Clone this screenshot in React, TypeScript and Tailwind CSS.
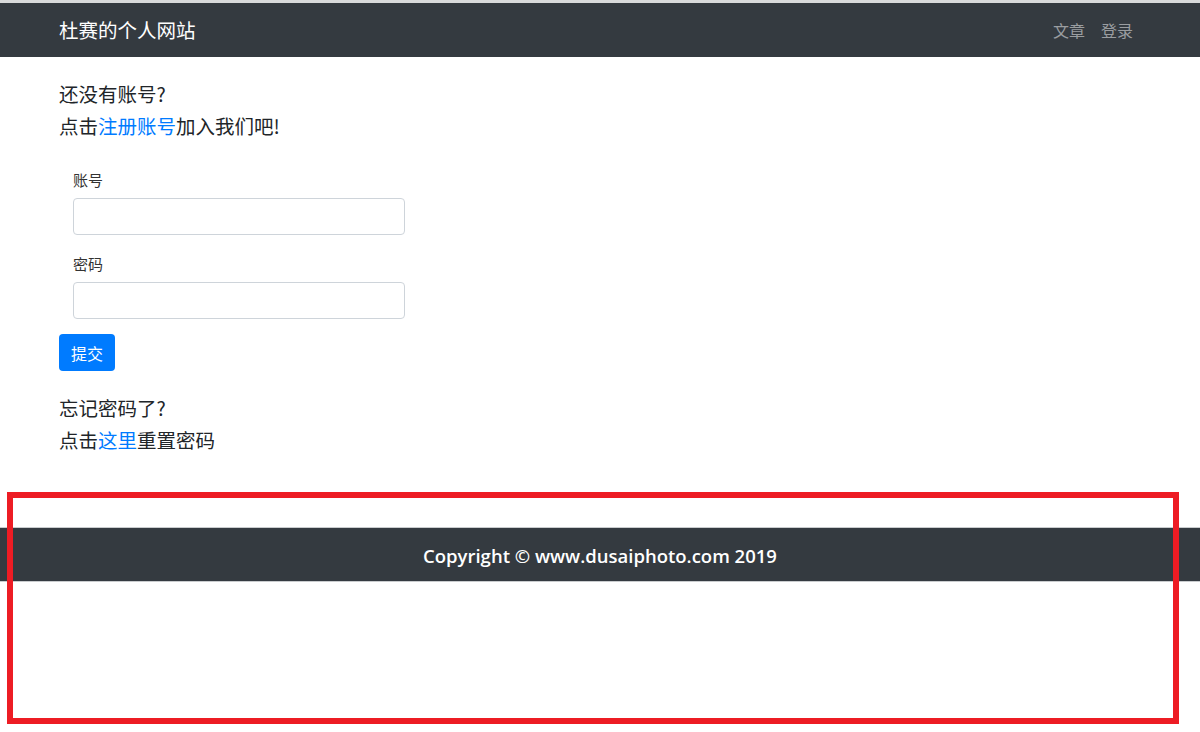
import React from "react";

const cjk = { fontFamily: '"Noto Sans CJK SC", "Noto Sans", sans-serif' };

export default function App() {
  return (
    <div className="relative min-h-[732px] bg-white text-[#212529]" style={cjk}>
      <div className="h-[3px] bg-[#d9dadb]" />
      <nav className="flex h-[54px] items-center justify-between bg-[#343a40] px-[59px]">
        <a className="text-[19.5px] leading-[30px] text-white">杜赛的个人网站</a>
        <div className="flex items-center text-[16px] leading-[24px] text-[#9a9da0]">
          <a className="px-[8px]">文章</a>
          <a className="pl-[8px] pr-[8px]">登录</a>
        </div>
      </nav>

      <main className="px-[59px] pt-[21px]">
        <div className="text-[19.5px] leading-[32px]">
          <p>还没有账号?</p>
          <p>
            点击<a className="text-[#007bff]">注册账号</a>加入我们吧!
          </p>
        </div>

        <form className="mt-[26px]">
          <div className="pl-[14px]">
            <label className="block text-[15px] leading-[24px] text-[#333]">账号</label>
            <input
              type="text"
              className="mt-[6px] block h-[37px] w-[332px] rounded-[4px] border border-[#ced4da] bg-white"
            />
          </div>
          <div className="mt-[17px] pl-[14px]">
            <label className="block text-[15px] leading-[24px] text-[#333]">密码</label>
            <input
              type="password"
              className="mt-[6px] block h-[37px] w-[332px] rounded-[4px] border border-[#ced4da] bg-white"
            />
          </div>
          <button
            type="button"
            className="mt-[15px] flex h-[37px] w-[56px] items-center justify-center rounded-[4px] bg-[#007bff] text-[16px] text-white"
          >
            提交
          </button>
        </form>

        <div className="mt-[21px] text-[19.5px] leading-[32px]">
          <p>忘记密码了?</p>
          <p>
            点击<a className="text-[#007bff]">这里</a>重置密码
          </p>
        </div>
      </main>

      <footer className="mt-[71px] border-t border-b border-[#c9ccce] bg-[#343a40]">
        <div
          className="flex h-[53px] items-center justify-center pt-[2px] text-[18.5px] font-semibold text-white"
          style={{ fontFamily: '"Open Sans", "Noto Sans", sans-serif' }}
        >
          Copyright © www.dusaiphoto.com 2019
        </div>
      </footer>

      <div className="pointer-events-none absolute left-[7px] top-[492px] h-[232px] w-[1172px] border-[6px] border-[#ed1c24]" />
    </div>
  );
}
